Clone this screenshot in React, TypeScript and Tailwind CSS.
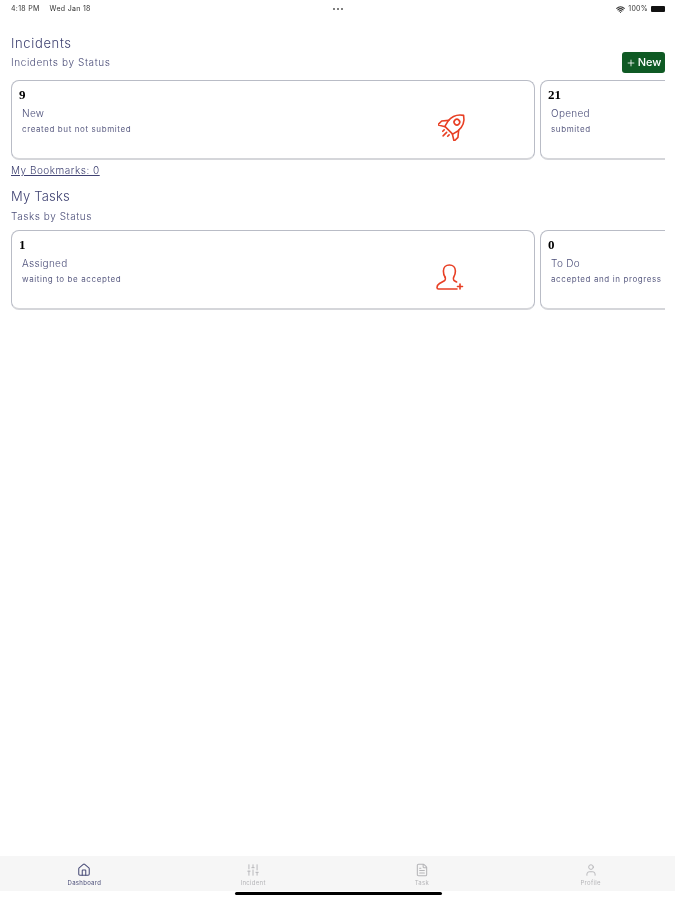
import React from "react";
import { Plus, Wifi, House, SlidersVertical, FileText, User } from "lucide-react";

const sans = "font-['Inter','Liberation_Sans',sans-serif]";

function StatCard({ count, title, sub, icon, wide }: { count: string; title: string; sub: string; icon?: React.ReactNode; wide?: boolean }) {
  return (
    <div className={`shrink-0 h-[80px] rounded-[8px] border border-[#b9bcc6] border-b-2 border-b-[#d5d6da] bg-white flex items-center ${wide ? "w-[524px] pr-[69px]" : "w-[200px]"}`}>
      <div className="flex-1 pl-[7px] pt-[6px] self-start">
        <div className="font-['Liberation_Serif',serif] font-bold text-[13px] leading-[16px] text-black">{count}</div>
        <div className="pl-[3px] mt-[3px] text-[10px] leading-[14px] font-light text-[#4a4d78] tracking-[0.3px]">{title}</div>
        <div className="pl-[3px] mt-[3px] text-[8px] leading-[12px] text-[#5a5c82] whitespace-nowrap tracking-[0.6px]">{sub}</div>
      </div>
      {icon}
    </div>
  );
}

function RocketIcon() {
  return (
    <svg className="shrink-0 mt-[13px] -mr-[3px]" width="30" height="30" viewBox="0 0 30 30" fill="none" stroke="#e83f24" strokeWidth="1.6" strokeLinecap="round" strokeLinejoin="round">
      <g transform="rotate(45 15 15)">
        <path d="M15 0C21 4 22.500 10 22 15L20.500 21H9.500L8 15C7.500 10 9 4 15 0Z" />
        <circle cx="15" cy="9.500" r="2.800" />
        <path d="M8 14L3.500 19.500V25L10 21M22 14L26.500 19.500V25L20 21" />
        <path d="M15 24V29M11.500 24V26M18.500 24V26" />
      </g>
    </svg>
  );
}

function UserPlusIcon() {
  return (
    <svg className="shrink-0 mt-[16px]" width="30" height="30" viewBox="0 0 30 30" fill="none" stroke="#e83f24" strokeWidth="1.6" strokeLinecap="round" strokeLinejoin="round">
      <path d="M10 14c-1.400-2-1.600-4.200-1.600-6C8.400 4.200 11 2 14.400 2s6 2.200 6 6c0 1.800-.3 4-1.600 6-.6 1-.5 3 .6 3.800l2.200 1.200" />
      <path d="M10 14c.6 1 .5 3-.6 3.800L4.500 20.500C3.300 21.300 2 22.500 2 24.500c0 1 .5 1.500 1.500 1.500H22" />
      <path d="M25 21v5M22.500 23.500h5" />
    </svg>
  );
}

function Tab({ label, active, children }: { label: string; active?: boolean; children: React.ReactNode }) {
  return (
    <div className={`flex-1 flex flex-col items-center pt-[7px] ${active ? "text-[#4a4d78]" : "text-[#b5b5b8]"}`}>
      {children}
      <span className="text-[6px] leading-[8px] mt-[2px] tracking-[0.3px]">{label}</span>
    </div>
  );
}

export default function App() {
  return (
    <div className={`${sans} h-[900px] w-[675px] bg-white flex flex-col overflow-hidden blur-[0.5px]`}>
      <div className="h-[16px] grid grid-cols-3 items-center pl-[11px] pr-[10px] pt-[2px] text-[7px] text-[#333] shrink-0 tracking-[0.3px]">
        <div className="flex gap-[10px]"><span>4:18 PM</span><span>Wed Jan 18</span></div>
        <div className="flex gap-[2px] justify-center">
          <span className="w-[2px] h-[2px] rounded-full bg-[#555]" />
          <span className="w-[2px] h-[2px] rounded-full bg-[#555]" />
          <span className="w-[2px] h-[2px] rounded-full bg-[#555]" />
        </div>
        <div className="flex items-center justify-end gap-[3px]">
          <Wifi size={9} strokeWidth={3} className="text-[#333]" />
          <span>100%</span>
          <span className="w-[14px] h-[6px] bg-[#111] rounded-[1px]" />
        </div>
      </div>

      <main className="flex-1 pl-[11px] pt-[19px]">
        <h1 className="text-[13px] leading-[16px] font-light text-[#3f4272] tracking-[0.65px]">Incidents</h1>
        <div className="flex items-center justify-between pr-[10px] mt-[1px] h-[21px]">
          <span className="text-[10px] font-light text-[#4a4d78] tracking-[0.6px]">Incidents by Status</span>
          <button className="h-[21px] w-[43px] rounded-[3px] bg-[#0f5a24] text-white text-[11px] font-medium flex items-center justify-center gap-[2px]">
            <Plus size={10} strokeWidth={2} />New
          </button>
        </div>
        <div className="flex gap-[5px] w-[654px] overflow-hidden mt-[7px]">
          <StatCard wide count="9" title="New" sub="created but not submited" icon={<RocketIcon />} />
          <StatCard count="21" title="Opened" sub="submited" />
        </div>
        <div className="mt-[4px] text-[10px] leading-[12px] font-light text-[#3f4272] underline tracking-[0.5px]">My Bookmarks: 0</div>

        <h2 className="mt-[12px] text-[13px] leading-[16px] font-light text-[#3f4272] tracking-[0.2px]">My Tasks</h2>
        <div className="mt-[6px] text-[10px] leading-[12px] font-light text-[#4a4d78] tracking-[0.55px]">Tasks by Status</div>
        <div className="flex gap-[5px] w-[654px] overflow-hidden mt-[8px]">
          <StatCard wide count="1" title="Assigned" sub="waiting to be accepted" icon={<UserPlusIcon />} />
          <StatCard count="0" title="To Do" sub="accepted and in progress" />
        </div>
      </main>

      <nav className="h-[35px] bg-[#f6f6f6] flex shrink-0">
        <Tab label="Dashboard" active><House size={14} strokeWidth={1.8} /></Tab>
        <Tab label="Incident"><SlidersVertical size={14} strokeWidth={1.6} /></Tab>
        <Tab label="Task"><FileText size={14} strokeWidth={1.8} /></Tab>
        <Tab label="Profile"><User size={14} strokeWidth={1.6} /></Tab>
      </nav>
      <div className="h-[9px] shrink-0 flex justify-center pt-[1px] pl-[1px]">
        <span className="w-[207px] h-[3px] rounded-full bg-black" />
      </div>
    </div>
  );
}
